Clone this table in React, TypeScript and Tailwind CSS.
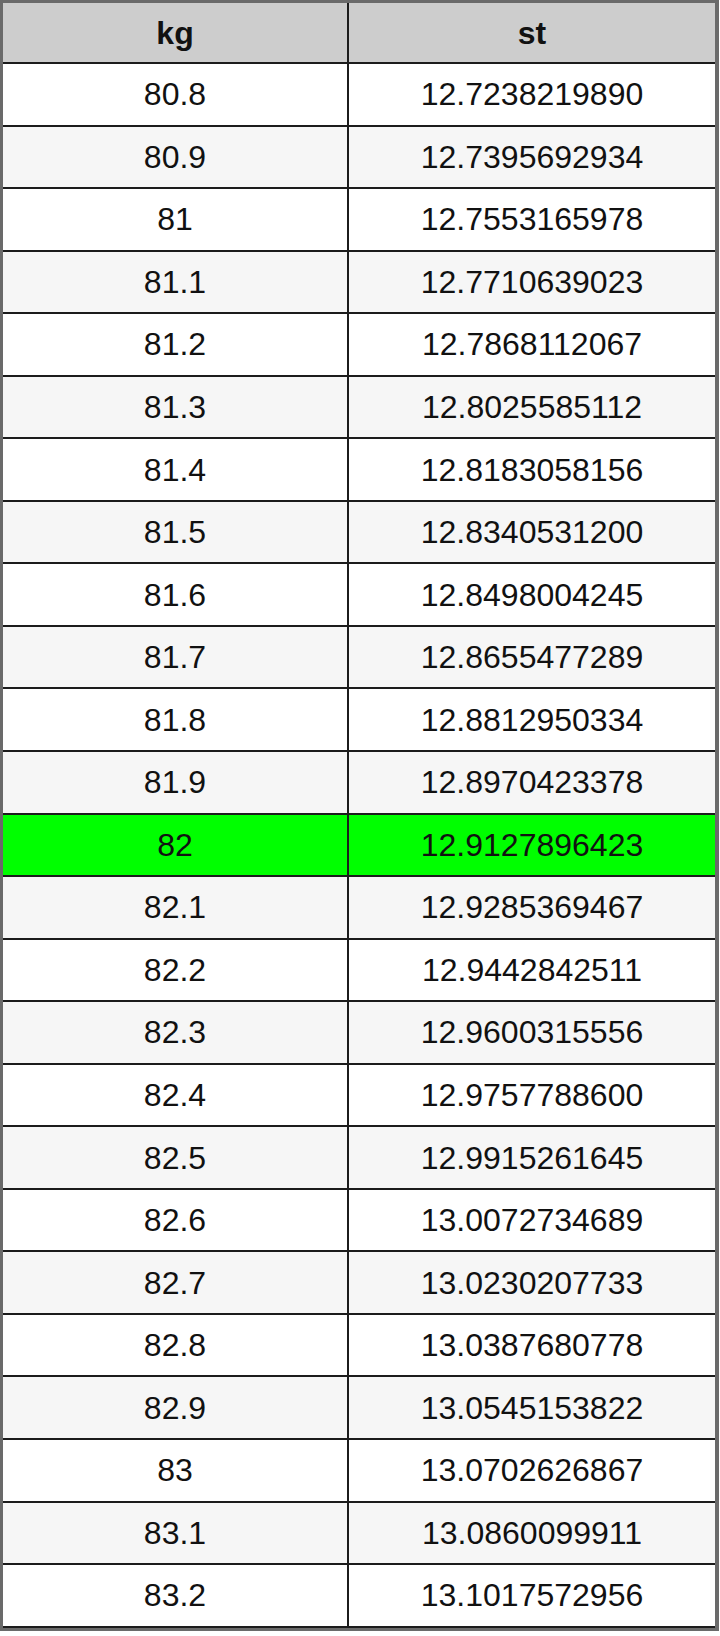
import React from 'react'

const rows: [string, string][] = [
  ['80.8', '12.7238219890'],
  ['80.9', '12.7395692934'],
  ['81', '12.7553165978'],
  ['81.1', '12.7710639023'],
  ['81.2', '12.7868112067'],
  ['81.3', '12.8025585112'],
  ['81.4', '12.8183058156'],
  ['81.5', '12.8340531200'],
  ['81.6', '12.8498004245'],
  ['81.7', '12.8655477289'],
  ['81.8', '12.8812950334'],
  ['81.9', '12.8970423378'],
  ['82', '12.9127896423'],
  ['82.1', '12.9285369467'],
  ['82.2', '12.9442842511'],
  ['82.3', '12.9600315556'],
  ['82.4', '12.9757788600'],
  ['82.5', '12.9915261645'],
  ['82.6', '13.0072734689'],
  ['82.7', '13.0230207733'],
  ['82.8', '13.0387680778'],
  ['82.9', '13.0545153822'],
  ['83', '13.0702626867'],
  ['83.1', '13.0860099911'],
  ['83.2', '13.1017572956'],
]

export default function App() {
  return (
    <div className="h-[1636px] w-[720px] bg-white text-[#111] [font-family:'Liberation_Sans',Arial,sans-serif]">
      <div className="w-[719px] border-b-[3px] border-l-[3px] border-r-[4px] border-t-[3px] border-[#6a6a6a]">
        <div className="flex h-[61px] border-b-2 border-[#1c1c1c] bg-[#cdcdcd] text-[32px] font-bold">
          <div className="flex w-[346px] items-center justify-center border-r-2 border-[#1c1c1c]">kg</div>
          <div className="flex flex-1 items-center justify-center">st</div>
        </div>
        {rows.map(([kg, st], i) => (
          <div
            key={kg}
            className={`flex h-[62.56px] border-b-2 border-[#1c1c1c] text-[32px] ${
              kg === '82' ? 'bg-[#00ff00]' : i % 2 === 1 ? 'bg-[#f6f6f6]' : 'bg-white'
            }`}
          >
            <div className="flex w-[346px] items-center justify-center border-r-2 border-[#1c1c1c]">{kg}</div>
            <div className="flex flex-1 items-center justify-center">{st}</div>
          </div>
        ))}
      </div>
    </div>
  )
}
